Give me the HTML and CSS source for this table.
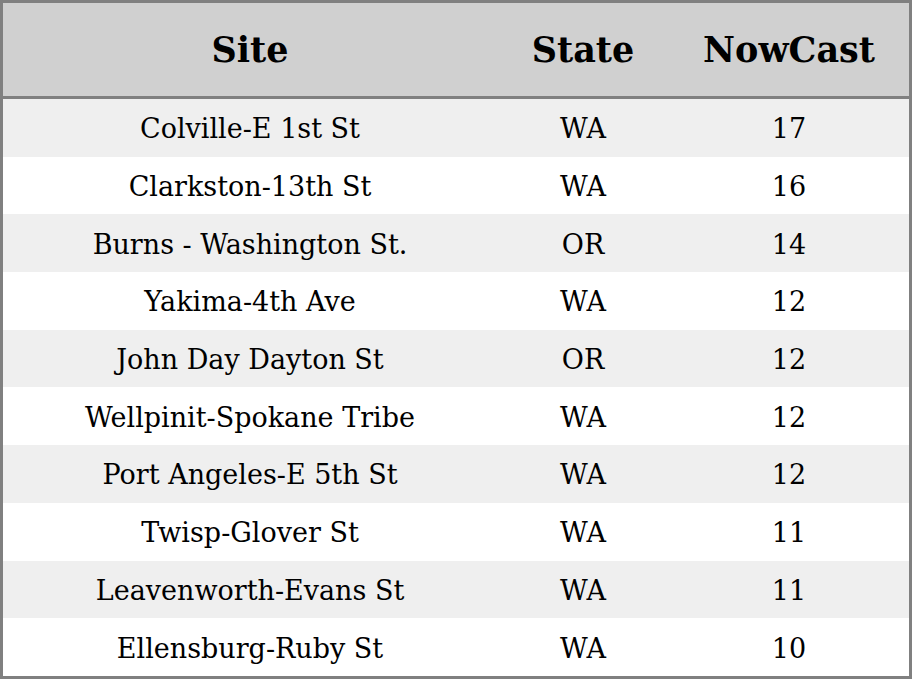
FILE: index.html
```html
<!DOCTYPE html>
<html>
<head>
<meta charset="utf-8">
<link rel="stylesheet" href="styles.css">
</head>
<body>
<table class="grid">
  <colgroup><col class="c-site"><col class="c-state"><col class="c-now"></colgroup>
  <thead>
    <tr><th>Site</th><th>State</th><th>NowCast</th></tr>
  </thead>
  <tbody>
    <tr><td>Colville-E 1st St</td><td>WA</td><td>17</td></tr>
    <tr><td>Clarkston-13th St</td><td>WA</td><td>16</td></tr>
    <tr><td>Burns - Washington St.</td><td>OR</td><td>14</td></tr>
    <tr><td>Yakima-4th Ave</td><td>WA</td><td>12</td></tr>
    <tr><td>John Day Dayton St</td><td>OR</td><td>12</td></tr>
    <tr><td>Wellpinit-Spokane Tribe</td><td>WA</td><td>12</td></tr>
    <tr><td>Port Angeles-E 5th St</td><td>WA</td><td>12</td></tr>
    <tr><td>Twisp-Glover St</td><td>WA</td><td>11</td></tr>
    <tr><td>Leavenworth-Evans St</td><td>WA</td><td>11</td></tr>
    <tr><td>Ellensburg-Ruby St</td><td>WA</td><td>10</td></tr>
  </tbody>
</table>
</body>
</html>
```
FILE: styles.css
```css
html, body { margin: 0; padding: 0; background: #fff; }
.grid {
  width: 912px;
  height: 679px;
  border: 3px solid #808080;
  border-collapse: separate;
  border-spacing: 0;
  table-layout: fixed;
  font-family: "DejaVu Serif", serif;
  color: #000;
  box-sizing: border-box;
}
.c-site { width: 494px; }
.c-state { width: 172px; }
.c-now { width: 240px; }
.grid th {
  height: 96px;
  padding: 0;
  background: #d0d0d0;
  border-bottom: 3px solid #808080;
  font-size: 35px;
  font-weight: bold;
  text-align: center;
  vertical-align: middle;
  box-sizing: border-box;
}
.grid td {
  height: 57.7px;
  padding: 2px 0 0 0;
  font-size: 27px;
  text-align: center;
  vertical-align: middle;
  box-sizing: border-box;
}
.grid tbody tr:nth-child(odd) td { background: #efefef; }
```
